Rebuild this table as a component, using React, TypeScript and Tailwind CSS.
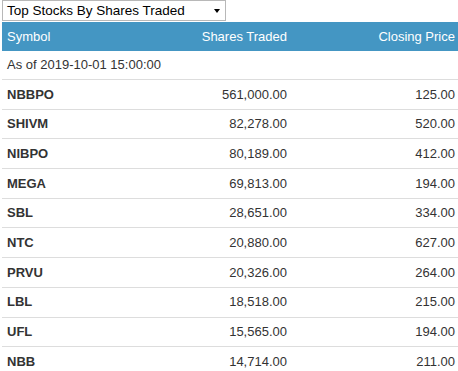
import { useState } from 'react';

const rows = [
  { symbol: 'NBBPO', shares: '561,000.00', price: '125.00' },
  { symbol: 'SHIVM', shares: '82,278.00', price: '520.00' },
  { symbol: 'NIBPO', shares: '80,189.00', price: '412.00' },
  { symbol: 'MEGA', shares: '69,813.00', price: '194.00' },
  { symbol: 'SBL', shares: '28,651.00', price: '334.00' },
  { symbol: 'NTC', shares: '20,880.00', price: '627.00' },
  { symbol: 'PRVU', shares: '20,326.00', price: '264.00' },
  { symbol: 'LBL', shares: '18,518.00', price: '215.00' },
  { symbol: 'UFL', shares: '15,565.00', price: '194.00' },
  { symbol: 'NBB', shares: '14,714.00', price: '211.00' },
];

export default function App() {
  const [view] = useState('Top Stocks By Shares Traded');

  return (
    <div className="min-h-screen bg-white text-[#333] font-['Liberation_Sans',Arial,sans-serif] text-[13px] overflow-hidden">
      {/* dropdown */}
      <div className="ml-[2px] w-[224px] h-[21px] border border-[#b8b8b8] flex items-center justify-between pl-[4px] pr-[5px] text-[13.5px] text-black leading-none">
        <span>{view}</span>
        <span className="w-0 h-0 border-l-[3.5px] border-r-[3.5px] border-t-[4px] border-l-transparent border-r-transparent border-t-black" />
      </div>

      <div className="ml-[2px] mt-[1px]">
        {/* header */}
        <div className="grid grid-cols-[150px_140px_1fr] h-[29px] items-center bg-[#4496c3] text-white">
          <div className="pl-[5px]">Symbol</div>
          <div className="text-right pr-[5px]">Shares Traded</div>
          <div className="text-right pr-[3px]">Closing Price</div>
        </div>

        <div className="h-[29px] flex items-center pl-[5px] border-b border-[#ddd]">As of 2019-10-01 15:00:00</div>

        {rows.map(r => (
          <div key={r.symbol} className="grid grid-cols-[150px_140px_1fr] h-[29.7px] items-center border-b border-[#ddd]">
            <div className="pl-[5px] font-bold">{r.symbol}</div>
            <div className="text-right pr-[5px]">{r.shares}</div>
            <div className="text-right pr-[3px]">{r.price}</div>
          </div>
        ))}
      </div>
    </div>
  );
}
